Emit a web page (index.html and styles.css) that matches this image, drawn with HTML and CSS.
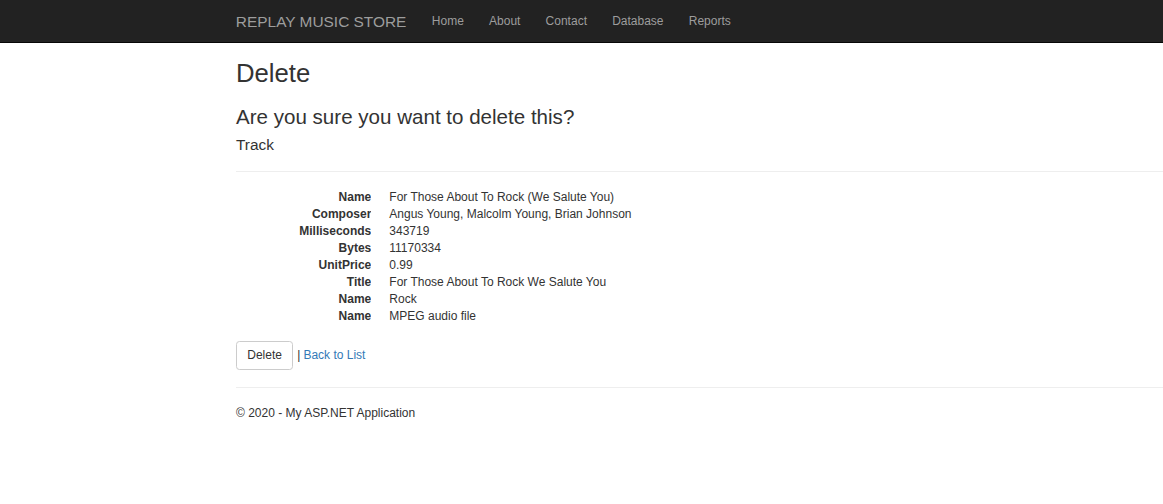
FILE: index.html
```html
<!DOCTYPE html>
<html>
<head>
<meta charset="utf-8">
<title>Delete - Replay Music Store</title>
<link rel="stylesheet" href="styles.css">
</head>
<body>
<div class="navbar">
  <div class="navbar-inner">
    <a class="navbar-brand" href="#">REPLAY MUSIC STORE</a>
    <ul class="nav">
      <li><a href="#">Home</a></li>
      <li><a href="#">About</a></li>
      <li><a href="#">Contact</a></li>
      <li><a href="#">Database</a></li>
      <li><a href="#">Reports</a></li>
    </ul>
  </div>
</div>
<div class="body-content">
  <h2>Delete</h2>
  <h3>Are you sure you want to delete this?</h3>
  <div>
    <h4>Track</h4>
    <hr>
    <dl class="dl-horizontal">
      <dt>Name</dt><dd>For Those About To Rock (We Salute You)</dd>
      <dt>Composer</dt><dd>Angus Young, Malcolm Young, Brian Johnson</dd>
      <dt>Milliseconds</dt><dd>343719</dd>
      <dt>Bytes</dt><dd>11170334</dd>
      <dt>UnitPrice</dt><dd>0.99</dd>
      <dt>Title</dt><dd>For Those About To Rock We Salute You</dd>
      <dt>Name</dt><dd>Rock</dd>
      <dt>Name</dt><dd>MPEG audio file</dd>
    </dl>
    <form class="form-actions">
      <button type="button" class="btn">Delete</button>
      <span class="sep">|</span>
      <a href="#">Back to List</a>
    </form>
  </div>
  <hr>
  <footer>
    <p>&copy; 2020 - My ASP.NET Application</p>
  </footer>
</div>
</body>
</html>
```
FILE: styles.css
```css
html, body {
  margin: 0;
}
body {
  font-family: "Liberation Sans", Arial, Helvetica, sans-serif;
  font-size: 12px;
  line-height: 17px;
  color: #333;
  background: #fff;
  padding-top: 42px;
  overflow-x: hidden;
}
a {
  color: #337ab7;
  text-decoration: none;
}
.navbar {
  position: fixed;
  top: 0;
  left: 0;
  right: 0;
  height: 42px;
  background: #222;
  border-bottom: 1px solid #080808;
}
.navbar-inner {
  display: flex;
  margin-left: 223px;
}
.navbar-brand {
  display: block;
  padding: 12.86px;
  font-size: 15.43px;
  line-height: 17.14px;
  color: #9d9d9d;
  height: 17.14px;
}
.nav {
  display: flex;
  list-style: none;
  margin: 0;
  padding: 0;
}
.nav a {
  display: block;
  padding: 12.86px 12.6px;
  line-height: 17.14px;
  color: #9d9d9d;
}
.body-content {
  padding-left: 236px;
}
h2, h3, h4 {
  font-weight: 500;
  line-height: 1.1;
}
h2 {
  font-size: 25.71px;
  margin: 17.14px 0 8.57px;
}
h3 {
  font-size: 20.57px;
  margin: 18.14px 0 8.57px;
}
h4 {
  font-size: 15.43px;
  margin: 3.57px 0 8.57px;
}
hr {
  margin: 17px 0;
  border: 0;
  border-top: 1px solid #eee;
  height: 0;
}
.dl-horizontal {
  margin: 0 0 16px;
}
.dl-horizontal dt {
  float: left;
  clear: left;
  width: 135.3px;
  text-align: right;
  font-weight: bold;
  overflow: hidden;
  white-space: nowrap;
}
.dl-horizontal dd {
  margin-left: 153.3px;
}
.dl-horizontal::after {
  content: "";
  display: table;
  clear: both;
}
.form-actions {
  margin: 0;
  display: flex;
  align-items: center;
}
.sep {
  margin: 0 3px 0 4px;
}
.btn {
  display: block;
  font-family: inherit;
  font-size: 12px;
  line-height: 17.14px;
  padding: 5.14px 10.29px;
  color: #333;
  background: #fff;
  border: 1px solid #ccc;
  border-radius: 3.43px;
  margin: 0;
}
footer p {
  margin: 0 0 8.57px;
}
```
